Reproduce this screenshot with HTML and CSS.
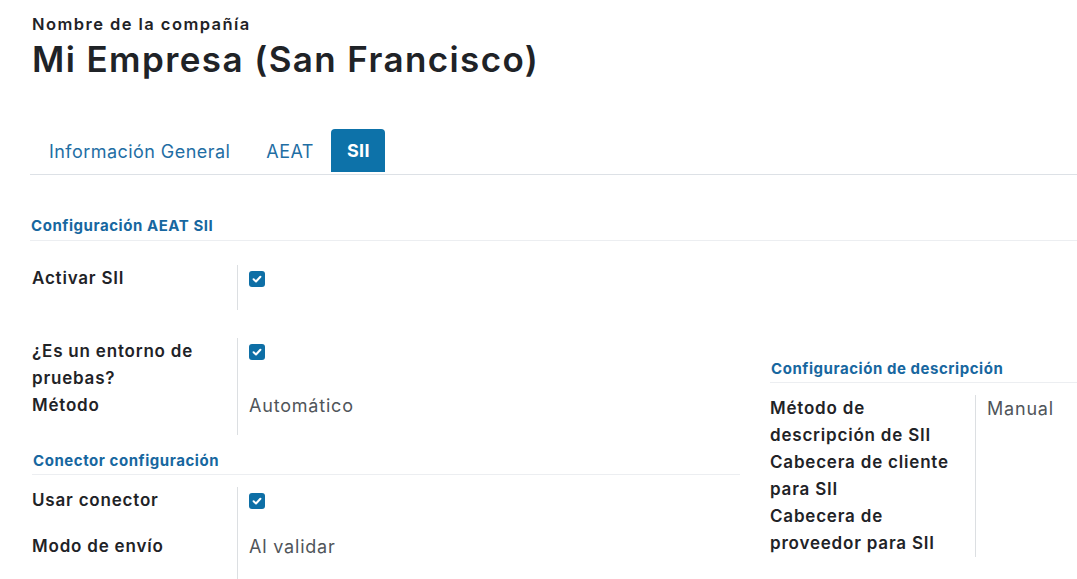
FILE: index.html
```html
<!DOCTYPE html>
<html lang="es">
<head>
<meta charset="utf-8">
<title>Mi Empresa (San Francisco)</title>
<link rel="stylesheet" href="styles.css">
</head>
<body>
<div class="sheet">
  <div class="company-label">Nombre de la compañía</div>
  <h1 class="title">Mi Empresa (San Francisco)</h1>

  <div class="tabs">
    <div class="tab">Información General</div>
    <div class="tab">AEAT</div>
    <div class="tab tab-active">SII</div>
  </div>

  <div class="section-head section-head-full">Configuración AEAT SII</div>

  <div class="row row-pad-lg">
    <div class="label">Activar SII</div>
    <div class="value"><span class="check"><svg viewBox="0 0 16 16" width="16" height="16"><path d="M4.6 8.3 L7 10.5 L11.4 5.8" fill="none" stroke="#fff" stroke-width="2" stroke-linecap="round" stroke-linejoin="round"/></svg></span></div>
  </div>

  <div class="columns">
    <div class="col-left">
      <div class="row">
        <div class="label">¿Es un entorno de pruebas?</div>
        <div class="value"><span class="check"><svg viewBox="0 0 16 16" width="16" height="16"><path d="M4.6 8.3 L7 10.5 L11.4 5.8" fill="none" stroke="#fff" stroke-width="2" stroke-linecap="round" stroke-linejoin="round"/></svg></span></div>
      </div>
      <div class="row row-pad-md">
        <div class="label">Método</div>
        <div class="value text">Automático</div>
      </div>

      <div class="section-head section-head-sub">Conector configuración</div>

      <div class="row row-pad-sm row-first">
        <div class="label">Usar conector</div>
        <div class="value"><span class="check"><svg viewBox="0 0 16 16" width="16" height="16"><path d="M4.6 8.3 L7 10.5 L11.4 5.8" fill="none" stroke="#fff" stroke-width="2" stroke-linecap="round" stroke-linejoin="round"/></svg></span></div>
      </div>
      <div class="row row-pad-sm">
        <div class="label">Modo de envío</div>
        <div class="value text">Al validar</div>
      </div>
    </div>

    <div class="col-right">
      <div class="section-head section-head-right">Configuración de descripción</div>
      <div class="row row-first-right">
        <div class="label">Método de descripción de SII</div>
        <div class="value text">Manual</div>
      </div>
      <div class="row">
        <div class="label">Cabecera de cliente para SII</div>
        <div class="value"></div>
      </div>
      <div class="row">
        <div class="label">Cabecera de proveedor para SII</div>
        <div class="value"></div>
      </div>
    </div>
  </div>
</div>
</body>
</html>
```

FILE: styles.css
```css
html, body {
  margin: 0;
  padding: 0;
  background: #ffffff;
  overflow: hidden;
}

body {
  font-family: "Inter", "Noto Sans", sans-serif;
  color: #1f2327;
}

.sheet {
  padding: 14px 0 0 32px;
}

.company-label {
  font-size: 16.5px;
  line-height: 21px;
  font-weight: 600;
  letter-spacing: 1.45px;
  color: #1f2327;
}

.title {
  margin: 2px 0 0 0;
  font-size: 35px;
  line-height: 44px;
  font-weight: 600;
  letter-spacing: 1.4px;
  color: #1f2327;
}

.tabs {
  display: flex;
  margin: 48px 0 0 -2px;
  border-bottom: 1px solid #dde1e6;
  height: 45px;
}

.tab {
  padding: 0 17px 0 19px;
  font-size: 18px;
  line-height: 45px;
  color: #1f6ea4;
  letter-spacing: 0.45px;
}

.tab-active {
  padding: 0 15px 0 16px;
  background: #0d72a9;
  color: #ffffff;
  font-weight: 700;
  border-radius: 4px 4px 0 0;
  line-height: 43px;
  height: 43px;
  border-bottom: 2px solid #ffffff;
  background-clip: padding-box;
}

.section-head {
  font-size: 15px;
  line-height: 20px;
  font-weight: 700;
  color: #1767a0;
  border-bottom: 1px solid #eceef1;
  letter-spacing: 0.55px;
}

.section-head-full {
  margin: 41px 0 0 -2px;
  padding: 0 0 4px 1px;
}

.section-head-sub {
  margin-top: 16px;
  padding: 0 0 3px 1px;
}

.section-head-right {
  padding: 0 0 3px 1px;
}

.row {
  display: flex;
  font-size: 17px;
  line-height: 27px;
}

.row-pad-lg {
  margin-top: 24px;
}
.row-pad-lg .label,
.row-pad-lg .value {
  padding-bottom: 18px;
}

.row-pad-md .label,
.row-pad-md .value {
  padding-bottom: 16px;
}

.row-pad-sm .label,
.row-pad-sm .value {
  padding-bottom: 19px;
}

.row-first {
  margin-top: 12px;
}

.row-first-right {
  margin-top: 12px;
}

.label {
  width: 205px;
  flex: none;
  box-sizing: border-box;
  padding-right: 10px;
  font-weight: 600;
  color: #1f2327;
  letter-spacing: 0.8px;
}

.value {
  flex: 1;
  border-left: 1px solid #dcdfe2;
  padding-left: 11px;
}

.value.text {
  font-size: 18px;
  color: #50555a;
  font-weight: 400;
  letter-spacing: 0.8px;
}

.check {
  display: inline-block;
  width: 16px;
  height: 16px;
  margin-top: 6px;
  border-radius: 3px;
  background: #0e6fa6;
  vertical-align: top;
}

.check svg {
  display: block;
}

.columns {
  display: grid;
  grid-template-columns: 708px 1fr;
  column-gap: 30px;
  margin-top: 28px;
  align-items: start;
}

.col-right {
  padding-top: 21px;
}
```
